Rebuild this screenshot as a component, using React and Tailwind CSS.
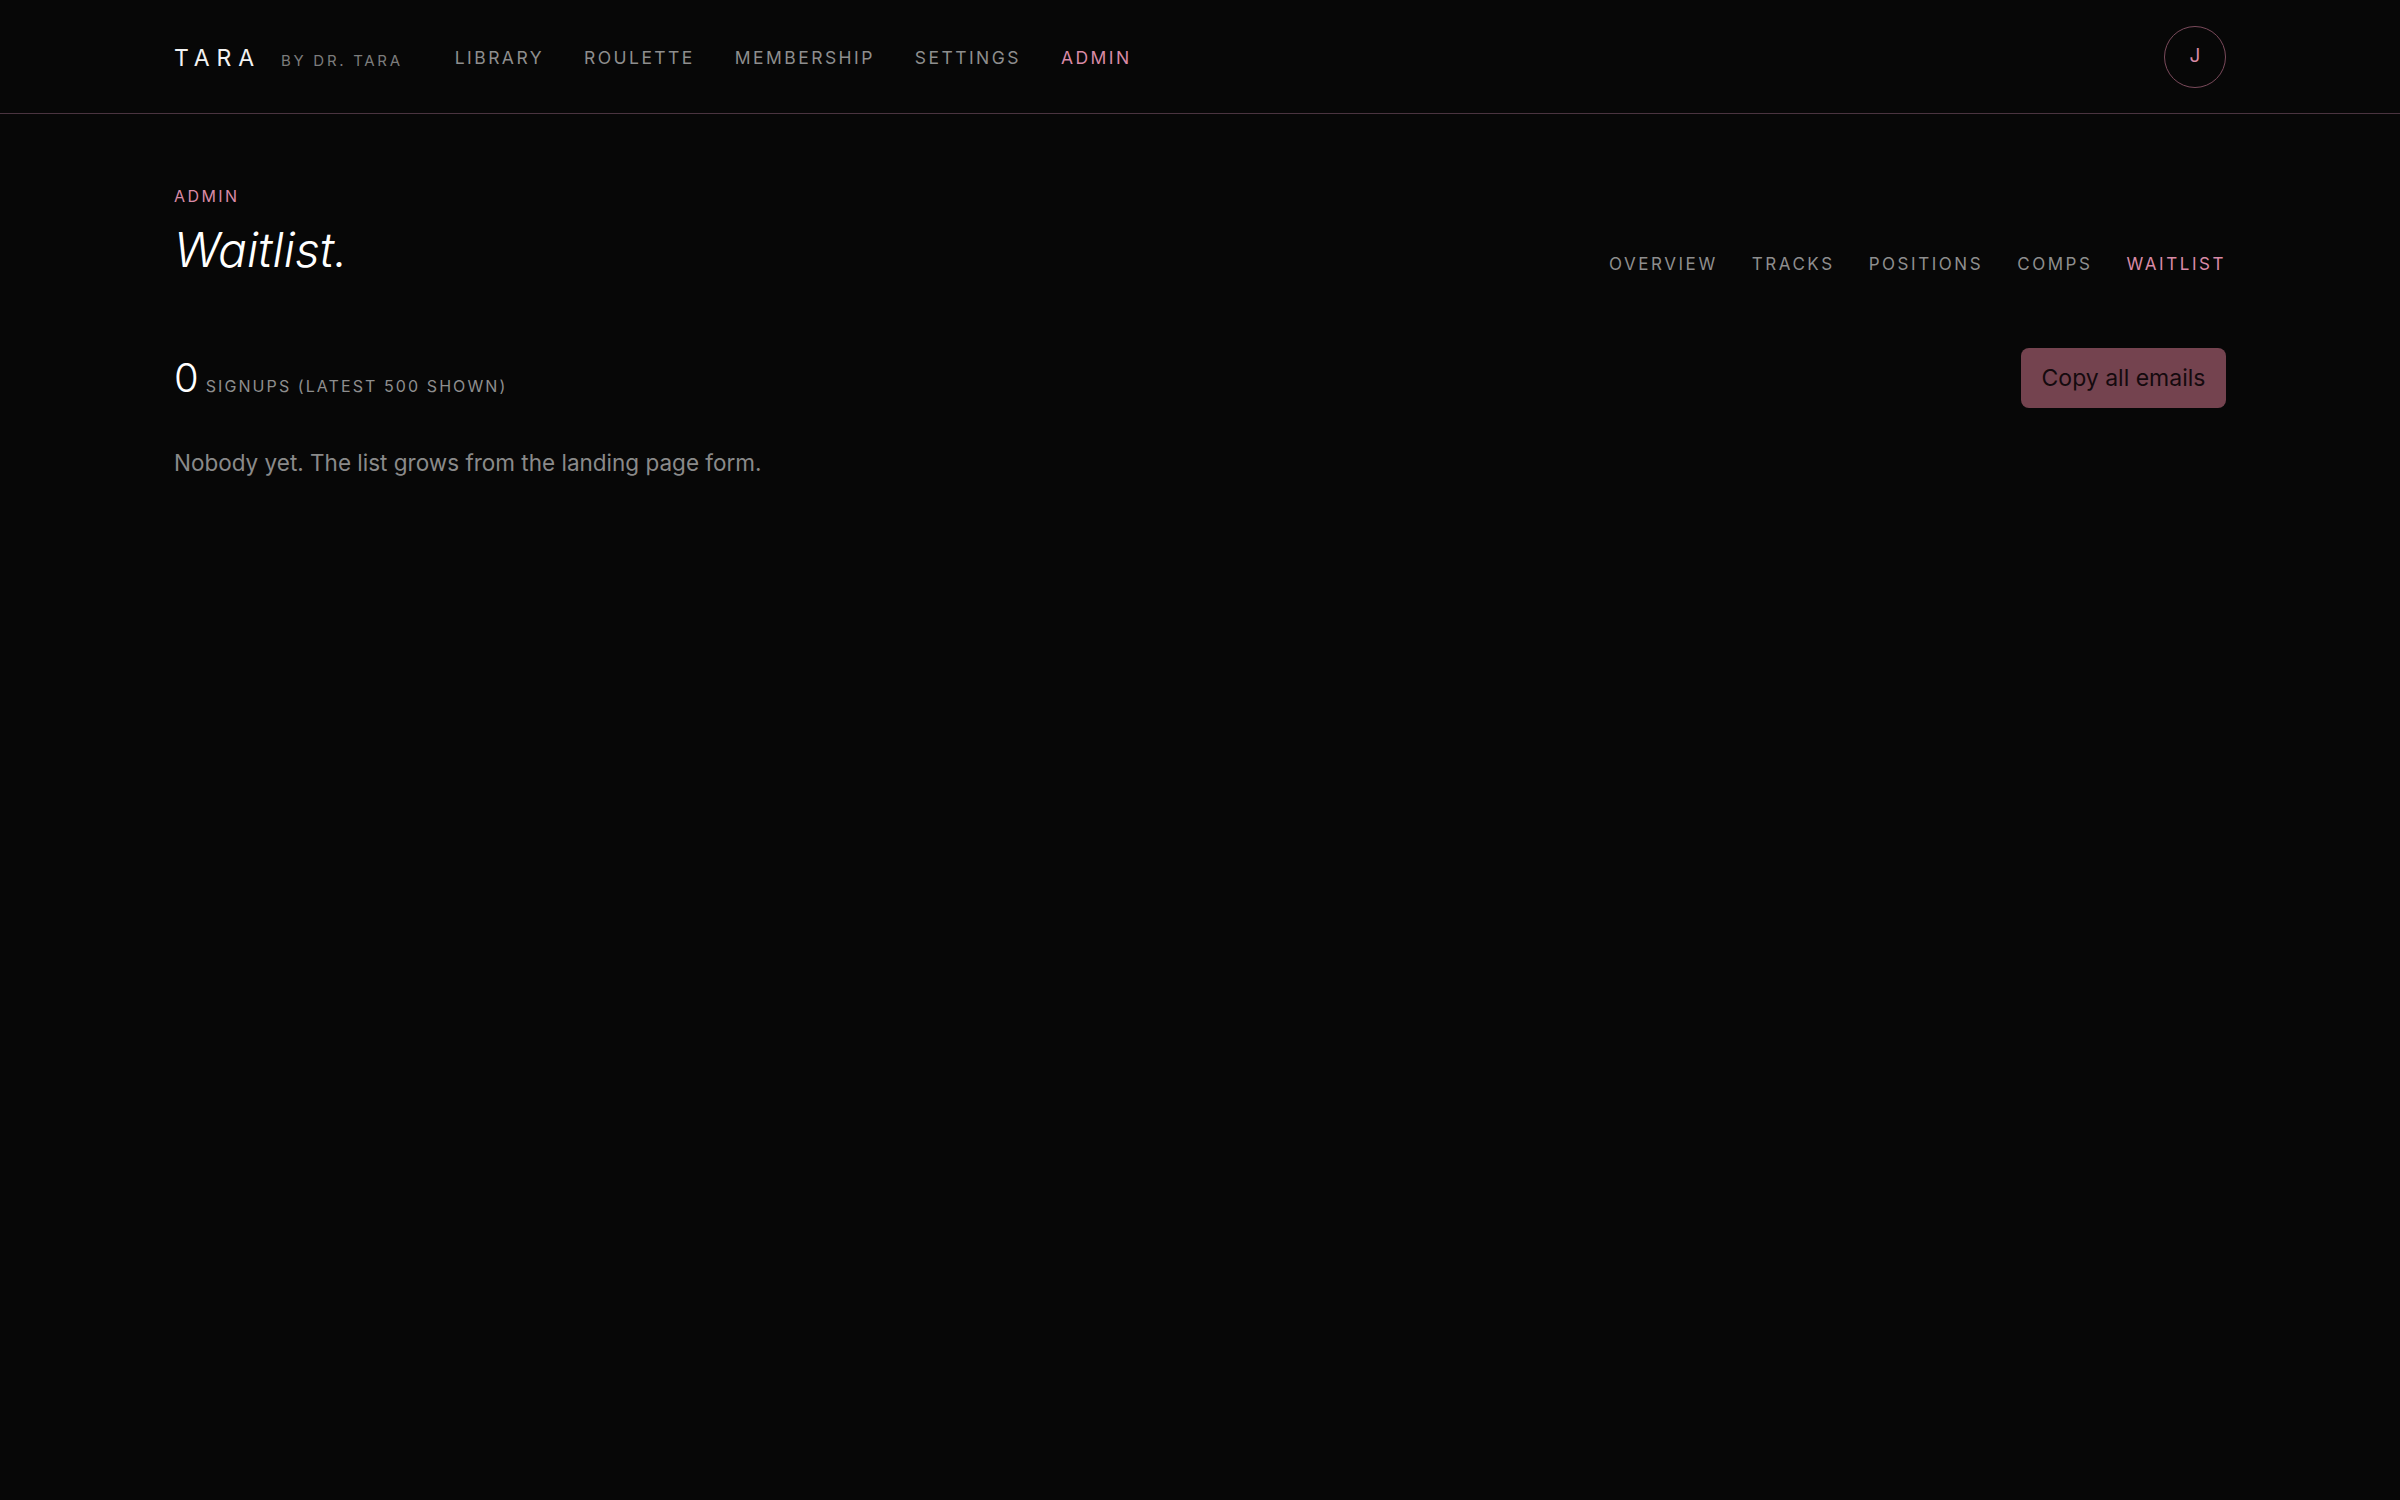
export default function App() {
  const font = { fontFamily: "Inter, 'Noto Sans', sans-serif" };
  const nav = ["LIBRARY", "ROULETTE", "MEMBERSHIP", "SETTINGS"];
  const sub = ["OVERVIEW", "TRACKS", "POSITIONS", "COMPS"];
  return (
    <div className="min-h-[1500px] w-full bg-[#070707] text-white" style={font}>
      <header className="flex h-[114px] items-center justify-between border-b border-[#4a3440] px-[174px]">
        <div className="flex items-center pt-[3px]">
          <div className="flex items-baseline">
            <span className="text-[23px] leading-none tracking-[0.3em] text-[#f2f2f2]">TARA</span>
            <span className="ml-[20px] text-[15px] leading-none tracking-[0.18em] text-[#7c7c7c]">BY DR. TARA</span>
          </div>
          <nav className="ml-[52px] flex items-center gap-[40px] text-[17.5px] tracking-[0.14em] text-[#8e8e8e]">
            {nav.map((n) => (
              <span key={n}>{n}</span>
            ))}
            <span className="text-[#d98aa6]">ADMIN</span>
          </nav>
        </div>
        <div className="flex h-[62px] w-[62px] items-center justify-center rounded-full border border-[#7a4a5b] text-[19px] text-[#d98aa6]">
          J
        </div>
      </header>

      <main className="px-[174px] pt-[70px]">
        <div className="text-[16px] leading-[24px] tracking-[0.15em] text-[#d98aa6]">ADMIN</div>
        <div className="mt-[12px] flex items-end justify-between">
          <h1 className="text-[48px] font-light italic leading-[60px] text-white">Waitlist.</h1>
          <div className="mb-[3px] flex items-center gap-[34px] text-[17px] tracking-[0.15em] text-[#8e8e8e]">
            {sub.map((s) => (
              <span key={s}>{s}</span>
            ))}
            <span className="text-[#d98aa6]">WAITLIST</span>
          </div>
        </div>

        <div className="mt-[68px] flex items-center justify-between">
          <div className="flex items-baseline gap-[7px]">
            <span className="text-[40px] font-light leading-none text-white">0</span>
            <span className="text-[16px] tracking-[0.13em] text-[#8e8e8e]">SIGNUPS (LATEST 500 SHOWN)</span>
          </div>
          <button className="flex h-[60px] w-[205px] items-center justify-center rounded-[8px] bg-[#74434f] text-[23px] text-[#140a0e]">
            Copy all emails
          </button>
        </div>

        <p className="mt-[38px] text-[22.5px] text-[#8a8a8a]">Nobody yet. The list grows from the landing page form.</p>
      </main>
    </div>
  );
}
